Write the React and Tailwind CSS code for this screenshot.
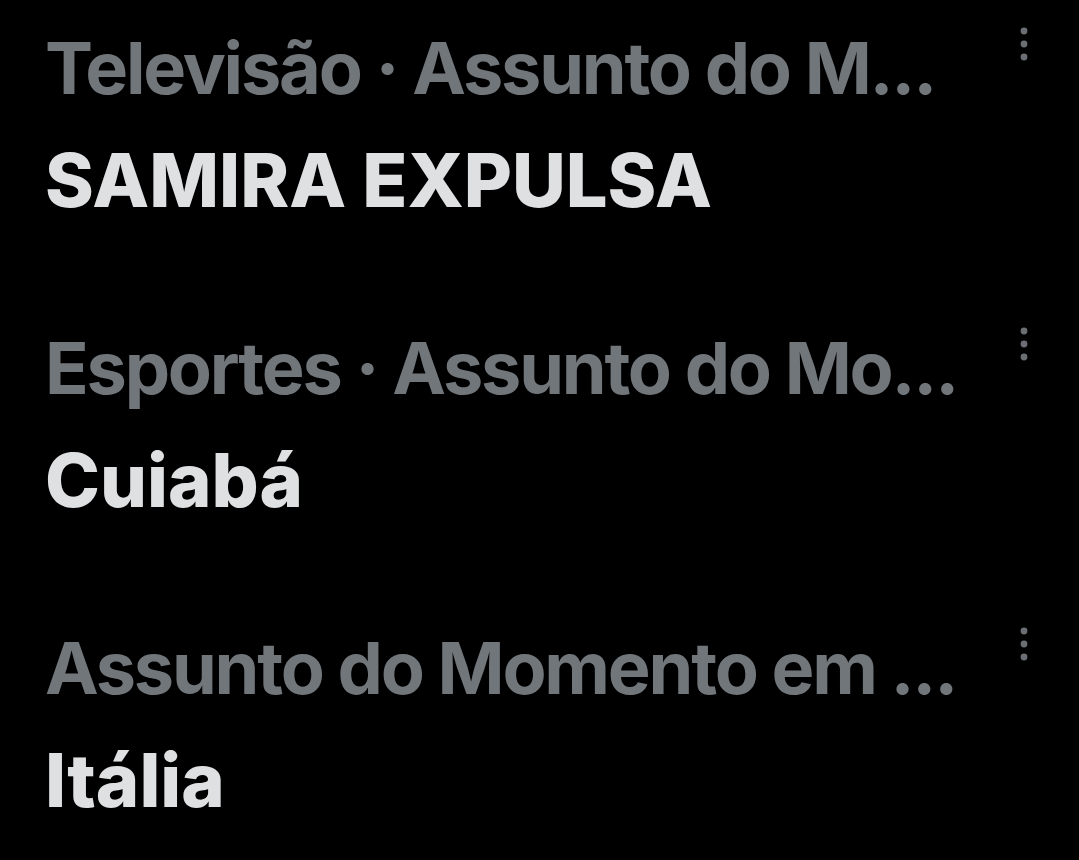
import React from "react";

const rows = [
  { cat: "Televisão · Assunto do M...", title: "SAMIRA EXPULSA" },
  { cat: "Esportes · Assunto do Mo...", title: "Cuiabá" },
  { cat: "Assunto do Momento em ...", title: "Itália" },
];

function Dots() {
  return (
    <svg width="8" height="34" viewBox="0 0 8 34" className="block">
      <circle cx="4" cy="4" r="3.4" fill="#6b6e72" />
      <circle cx="4" cy="17" r="3.4" fill="#6b6e72" />
      <circle cx="4" cy="30" r="3.4" fill="#6b6e72" />
    </svg>
  );
}

export default function App() {
  return (
    <div
      className="bg-black w-[1079px] h-[860px] overflow-hidden pl-[45px] pt-[12px] flex flex-col gap-[76px]"
      style={{ fontFamily: "Inter, 'Noto Sans', sans-serif" }}
    >
      {rows.map((r, i) => (
        <div key={i} className="flex items-start">
          <div className="w-[915px] shrink-0">
            <div className="whitespace-nowrap font-bold text-[72px] leading-[112px] tracking-[-2.2px] text-[#71767b]">{r.cat}</div>
            <div className="whitespace-nowrap font-extrabold text-[74px] leading-[112px] tracking-[0px] text-[#dfe0e1]">{r.title}</div>
          </div>
          <div className="flex-1 pl-[60px] pt-[15px]">
            <Dots />
          </div>
        </div>
      ))}
    </div>
  );
}
